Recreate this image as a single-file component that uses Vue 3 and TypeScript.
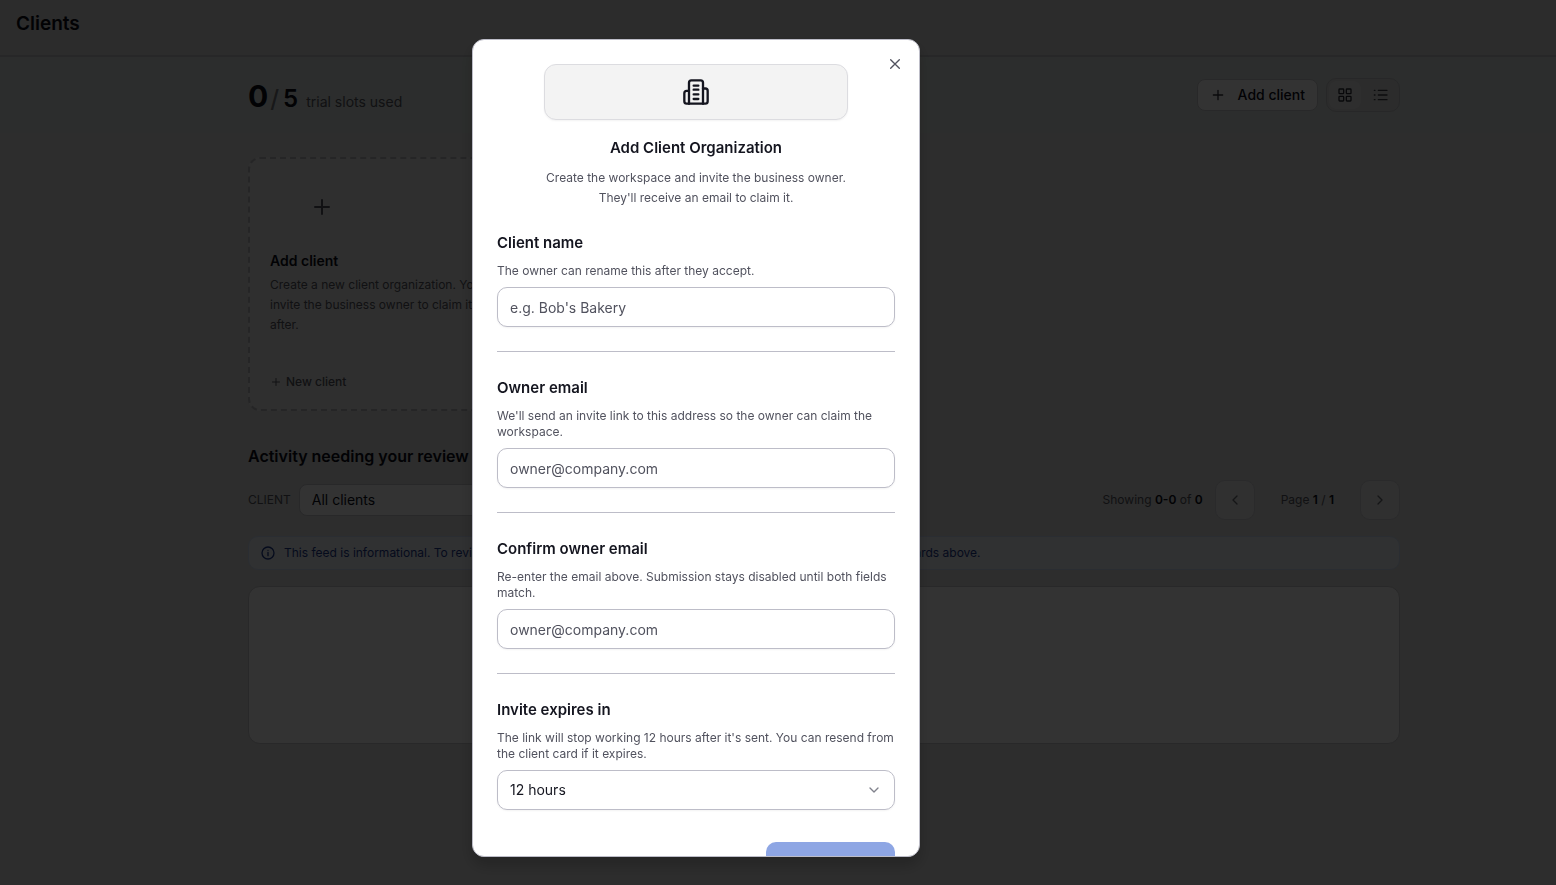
<script setup lang="ts">
import { ref } from 'vue'

interface Field {
  id: string
  label: string
  hint: string
  placeholder: string
  type: string
}

const fields: Field[] = [
  { id: 'client-name', label: 'Client name', hint: 'The owner can rename this after they accept.', placeholder: "e.g. Bob's Bakery", type: 'text' },
  { id: 'owner-email', label: 'Owner email', hint: "We'll send an invite link to this address so the owner can claim the workspace.", placeholder: 'owner@company.com', type: 'email' },
  { id: 'confirm-email', label: 'Confirm owner email', hint: 'Re-enter the email above. Submission stays disabled until both fields match.', placeholder: 'owner@company.com', type: 'email' },
]
const values = ref<Record<string, string>>({ 'client-name': '', 'owner-email': '', 'confirm-email': '' })
const expiry = ref('12 hours')
const client = ref('All clients')
</script>

<template>
  <div class="page">
    <header class="topbar"><h1>Clients</h1></header>

    <section class="hero">
      <p class="slots"><strong>0</strong><span class="slash">/</span><b>5</b><span class="slots-label">trial slots used</span></p>
      <div class="actions">
        <button type="button" class="add">
          <svg width="16" height="16" viewBox="0 0 24 24"><path d="M5 12h14M12 5v14" /></svg>
          Add client
        </button>
        <div class="toggle">
          <button type="button" class="active" aria-label="Grid view">
            <svg width="16" height="16" viewBox="0 0 24 24"><rect x="3" y="3" width="7" height="7" rx="1" /><rect x="14" y="3" width="7" height="7" rx="1" /><rect x="3" y="14" width="7" height="7" rx="1" /><rect x="14" y="14" width="7" height="7" rx="1" /></svg>
          </button>
          <button type="button" aria-label="List view">
            <svg width="16" height="16" viewBox="0 0 24 24"><path d="M8 5h13M8 12h13M8 19h13M2 5h1M2 12h1M2 19h1" /></svg>
          </button>
        </div>
      </div>
    </section>

    <main class="content">
      <div class="cards">
        <article class="new-card">
          <div class="plus-box">
            <svg width="24" height="24" viewBox="0 0 24 24"><path d="M5 12h14M12 5v14" /></svg>
          </div>
          <h2>Add client</h2>
          <p>Create a new client organization. You'll invite the business owner to claim it right after.</p>
          <button type="button" class="new-link">
            <svg width="12" height="12" viewBox="0 0 24 24"><path d="M5 12h14M12 5v14" /></svg>
            New client
          </button>
        </article>
      </div>

      <h2 class="activity">Activity needing your review</h2>
      <div class="filters">
        <label for="client-filter">CLIENT</label>
        <select id="client-filter" v-model="client"><option>All clients</option></select>
        <div class="pager">
          <span class="showing">Showing <b>0-0</b> of <b>0</b></span>
          <button type="button" aria-label="Previous page"><svg width="16" height="16" viewBox="0 0 24 24"><path d="m15 18-6-6 6-6" /></svg></button>
          <span class="page-no">Page <b>1</b> / <b>1</b></span>
          <button type="button" aria-label="Next page"><svg width="16" height="16" viewBox="0 0 24 24"><path d="m9 18 6-6-6-6" /></svg></button>
        </div>
      </div>
      <p class="banner">
        <svg width="16" height="16" viewBox="0 0 24 24"><circle cx="12" cy="12" r="9" /><path d="M12 16v-5M12 8h.01" /></svg>
        This feed is informational. To review or approve items, open the client workspace directly via one of the client cards above.
      </p>
      <div class="feed"></div>
    </main>

    <div class="overlay">
      <div class="dialog" role="dialog" aria-modal="true" aria-labelledby="dialog-title">
        <button type="button" class="close" aria-label="Close">
          <svg width="16" height="16" viewBox="0 0 24 24"><path d="M18.500 5.500 5.500 18.500M5.500 5.500l13 13" /></svg>
        </button>
        <div class="intro">
          <div class="icon-box">
            <svg width="28" height="28" viewBox="0 0 24 24">
              <path d="M10 6.500h4M10 10h4M10 14h4M10 18h4" />
              <path d="M6 11H4a2 2 0 0 0-2 2v7a2 2 0 0 0 2 2h16a2 2 0 0 0 2-2v-9a2 2 0 0 0-2-2h-2" />
              <path d="M6 22V4a2 2 0 0 1 2-2h8a2 2 0 0 1 2 2v18" />
            </svg>
          </div>
          <h2 id="dialog-title">Add Client Organization</h2>
          <p>Create the workspace and invite the business owner. They'll receive an email to claim it.</p>
        </div>
        <form @submit.prevent>
          <div v-for="field in fields" :key="field.id" class="field">
            <label :for="field.id">{{ field.label }}</label>
            <p>{{ field.hint }}</p>
            <input :id="field.id" v-model="values[field.id]" :type="field.type" :placeholder="field.placeholder" />
          </div>
          <div class="field">
            <label for="expiry">Invite expires in</label>
            <p>The link will stop working {{ expiry }} after it's sent. You can resend from the client card if it expires.</p>
            <div class="select-wrap">
              <select id="expiry" v-model="expiry"><option>12 hours</option><option>24 hours</option></select>
              <svg width="16" height="16" viewBox="0 0 24 24"><path d="m6 9 6 6 6-6" /></svg>
            </div>
          </div>
          <div class="footer"><button type="submit" disabled aria-label="Send invite"></button></div>
        </form>
      </div>
    </div>
  </div>
</template>

<style>
body {
  margin: 0;
  overflow: hidden;
}
</style>

<style scoped>
* {
  box-sizing: border-box;
}
.page {
  min-height: 100vh;
  background: #dedede;
  color: #0a0d18;
  font-family: Inter, "Liberation Sans", sans-serif;
  font-size: 14px;
  line-height: 20px;
}
h1, h2, p {
  margin: 0;
}
button, input, select {
  font: inherit;
  color: inherit;
}
button {
  display: flex;
  align-items: center;
  justify-content: center;
  padding: 0;
  border: 0;
  background: none;
}
svg {
  flex: none;
  fill: none;
  stroke: currentColor;
  stroke-width: 2;
  stroke-linecap: round;
  stroke-linejoin: round;
}
b {
  font-weight: 600;
}
.topbar {
  height: 57px;
  padding: 10px 16px;
  border-bottom: 2px solid #c3c3c6;
  background: #dadada;
}
.topbar h1 {
  font-size: 19px;
  line-height: 28px;
  font-weight: 600;
}
.hero {
  display: flex;
  align-items: center;
  justify-content: space-between;
  height: 76px;
  padding: 0 156px 0 248px;
  background: #dce2df;
}
.slots {
  display: flex;
  align-items: baseline;
  margin-top: 8px;
  line-height: 32px;
}
.slots strong {
  font-size: 30px;
  font-weight: 700;
}
.slots b, .slash {
  font-size: 24px;
}
.slash {
  margin: 0 4px 0 2px;
  color: #77777e;
  font-weight: 500;
}
.slots-label {
  margin-left: 8px;
  color: #55565e;
}
.actions {
  display: flex;
  align-items: center;
  gap: 8px;
}
.add {
  gap: 12px;
  height: 32px;
  padding: 0 12px;
  border: 1px solid #c8c8cc;
  border-radius: 8px;
  background: #fff;
  font-weight: 500;
}
.add svg {
  color: #33343c;
}
.toggle {
  display: flex;
  gap: 4px;
  padding: 2px;
  border: 1px solid #c3c3c7;
  border-radius: 10px;
  background: #dadada;
}
.toggle button {
  width: 32px;
  height: 28px;
  border-radius: 8px;
  color: #3c3d45;
}
.toggle .active {
  background: #e6e6e6;
  color: #2a2b33;
}
.content {
  padding: 24px 156px 24px 248px;
}
.cards {
  display: grid;
  grid-template-columns: repeat(4, 1fr);
  gap: 16px;
}
.new-card {
  display: flex;
  flex-direction: column;
  align-items: flex-start;
  min-height: 254px;
  padding: 12px 20px 17px;
  border: 2px dashed #b8b8bc;
  border-radius: 12px;
  background: #ebebeb;
}
.plus-box {
  display: flex;
  align-items: center;
  justify-content: center;
  width: 104px;
  height: 72px;
  margin-bottom: 8px;
  color: #55565e;
}
.new-card h2 {
  font-size: 14px;
  font-weight: 600;
}
.new-card p {
  margin-top: 4px;
  color: #55565e;
  font-size: 12px;
}
.new-link {
  gap: 4px;
  margin-top: auto;
  color: #55565e;
  font-size: 12px;
  font-weight: 500;
}
.activity {
  margin: 33px 0 12px;
  font-size: 16px;
  line-height: 24px;
  font-weight: 600;
}
.filters {
  display: flex;
  align-items: center;
  gap: 8px;
  font-size: 12px;
}
.filters label, .pager {
  color: #55565e;
}
.filters select {
  appearance: none;
  width: 224px;
  height: 32px;
  padding: 0 12px;
  border: 1px solid #c8c8cc;
  border-radius: 8px;
  background: #fff;
  font-size: 14px;
}
.pager {
  display: flex;
  align-items: center;
  gap: 12px;
  margin-left: auto;
}
.pager b {
  color: #0a0d18;
}
.pager button {
  width: 40px;
  height: 40px;
  border: 1px solid #d2d2d6;
  border-radius: 10px;
  background: #f0f0f0;
  color: #6b6c74;
}
.page-no {
  padding: 0 14px;
}
.banner {
  display: flex;
  align-items: center;
  gap: 8px;
  height: 34px;
  margin: 16px 0;
  padding: 0 11px;
  border: 1px solid #d3dff7;
  border-radius: 10px;
  background: #eff3fa;
  color: #1c398e;
  font-size: 12px;
  white-space: nowrap;
}
.feed {
  height: 158px;
  border: 1px solid #c8c8cc;
  border-radius: 12px;
  background: #fff;
}
.overlay {
  position: fixed;
  inset: 0;
  display: flex;
  align-items: flex-start;
  justify-content: center;
  padding: 39px 164px 28px 0;
  background: rgb(0 0 0 / 80%);
}
.dialog {
  position: relative;
  width: 448px;
  max-height: 100%;
  padding: 24px;
  overflow: hidden;
  border: 1px solid #bdbdc8;
  border-radius: 12px;
  background: #fff;
  box-shadow: 0 8px 16px rgb(0 0 0 / 20%);
  color: #14151f;
}
.close {
  position: absolute;
  top: 16px;
  right: 16px;
  width: 16px;
  height: 16px;
  color: #51525e;
}
.intro {
  display: flex;
  flex-direction: column;
  align-items: center;
  width: 304px;
  margin: 0 auto 23px;
  text-align: center;
}
.icon-box {
  display: flex;
  align-items: center;
  justify-content: center;
  align-self: stretch;
  height: 56px;
  margin-bottom: 16px;
  border: 1px solid #dcdce0;
  border-radius: 12px;
  background: #f3f3f3;
  box-shadow: 0 1px 2px rgb(0 0 0 / 5%);
}
.intro h2 {
  margin-bottom: 8px;
  font-size: 15px;
  line-height: 24px;
  font-weight: 600;
}
.intro p {
  color: #51525e;
  font-size: 12px;
}
.field {
  display: flex;
  flex-direction: column;
}
.field + .field {
  margin-top: 24px;
  padding-top: 24px;
  border-top: 1px solid #bdbdc8;
}
.field:nth-child(4) {
  margin-bottom: 32px;
}
.field label {
  font-size: 15px;
  line-height: 24px;
  font-weight: 600;
}
.field p {
  margin: 8px 0;
  color: #51525e;
  font-size: 12px;
  line-height: 16px;
}
.field input, .field select {
  width: 100%;
  height: 40px;
  padding: 0 12px;
  border: 1px solid #bdbdc8;
  border-radius: 10px;
  background: #fff;
  box-shadow: 0 1px 2px rgb(0 0 0 / 5%);
  font-size: 14px;
}
.field input::placeholder {
  color: #51525e;
  opacity: 1;
}
.select-wrap {
  display: grid;
  align-items: center;
}
.select-wrap > * {
  grid-area: 1 / 1;
}
.select-wrap select {
  appearance: none;
}
.select-wrap svg {
  justify-self: end;
  margin-right: 13px;
  color: #81828c;
  pointer-events: none;
}
.footer {
  display: flex;
  justify-content: flex-end;
}
.footer button {
  width: 129px;
  height: 40px;
  border-radius: 10px;
  background: #8ea6e4;
}
</style>
